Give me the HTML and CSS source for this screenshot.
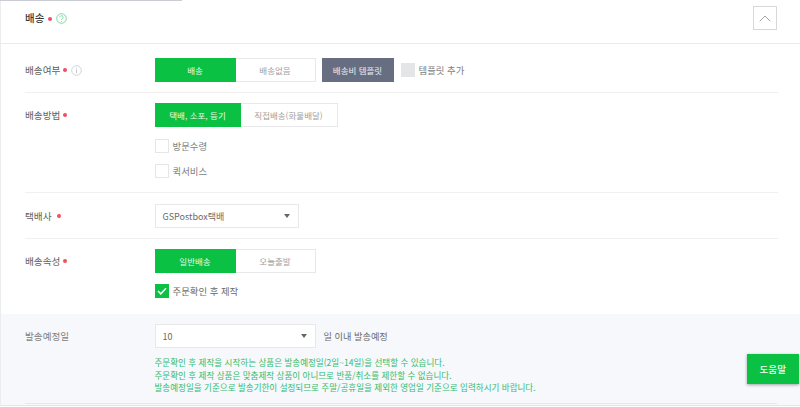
FILE: index.html
```html
<!DOCTYPE html>
<html lang="ko">
<head>
<meta charset="utf-8">
<title>배송</title>
<link rel="stylesheet" href="styles.css">
</head>
<body>
<div class="top-edge"></div>
<section class="panel">
  <header class="head">
    <h2 class="title">배송</h2><span class="dot"></span>
    <svg class="ico" width="11" height="11" viewBox="0 0 11 11"><circle cx="5.5" cy="5.5" r="4.8" fill="none" stroke="#5fce8a" stroke-width=".8"/><path d="M3.9 4.3a1.6 1.6 0 1 1 2.5 1.3c-.6.4-.9.7-.9 1.3" fill="none" stroke="#5fce8a" stroke-width=".8"/><circle cx="5.5" cy="8.2" r=".5" fill="#5fce8a"/></svg>
    <button class="collapse"><svg width="12" height="7" viewBox="0 0 12 7"><path d="M.7 6.3 6 1l5.3 5.3" fill="none" stroke="#a5a5a5" stroke-width="1"/></svg></button>
  </header>
  <div class="row r1">
    <div class="label">배송여부<span class="dot"></span><svg class="ico" width="11" height="11" viewBox="0 0 11 11"><circle cx="5.5" cy="5.5" r="4.8" fill="none" stroke="#c4c8d0" stroke-width=".8"/><path d="M5.5 4.6v3.6M5.5 2.8v.9" stroke="#b5b9c2" stroke-width=".8"/></svg></div>
    <div class="field">
      <div class="line">
        <div class="seg"><span class="opt on w81">배송</span><span class="opt w80">배송없음</span></div>
        <button class="tpl">배송비 템플릿</button>
        <span class="box grey"></span><span class="txt">템플릿 추가</span>
      </div>
    </div>
  </div>
  <div class="row r2">
    <div class="label">배송방법<span class="dot"></span></div>
    <div class="field">
      <div class="seg"><span class="opt on w86">택배, 소포, 등기</span><span class="opt w97">직접배송(화물배달)</span></div>
      <div class="check c1"><span class="box"></span><span class="txt">방문수령</span></div>
      <div class="check c2"><span class="box"></span><span class="txt">퀵서비스</span></div>
    </div>
  </div>
  <div class="row r3">
    <div class="label">택배사<span class="dot wide"></span></div>
    <div class="field">
      <div class="select w144"><span>GSPostbox택배</span><i class="caret"></i></div>
    </div>
  </div>
  <div class="row r4">
    <div class="label">배송속성<span class="dot"></span></div>
    <div class="field">
      <div class="seg"><span class="opt on w81">일반배송</span><span class="opt w80">오늘출발</span></div>
      <div class="check c3">
        <span class="box on"><svg width="10" height="8" viewBox="0 0 10 8"><path d="M1 4l2.8 2.8L9 1.2" fill="none" stroke="#fff" stroke-width="1.5"/></svg></span>
        <span class="txt strong">주문확인 후 제작</span>
      </div>
    </div>
  </div>
  <div class="row r5">
    <div class="label soft">발송예정일</div>
    <div class="field">
      <div class="line">
        <div class="select w161"><span>10</span><i class="caret"></i></div>
        <span class="txt after">일 이내 발송예정</span>
      </div>
      <ul class="notes">
        <li>주문확인 후 제작을 시작하는 상품은 발송예정일(2일~14일)을 선택할 수 있습니다.</li>
        <li>주문확인 후 제작 상품은 맞춤제작 상품이 아니므로 반품/취소를 제한할 수 없습니다.</li>
        <li>발송예정일을 기준으로 발송기한이 설정되므로 주말/공휴일을 제외한 영업일 기준으로 입력하시기 바랍니다.</li>
      </ul>
    </div>
  </div>
  <div class="tail"></div>
</section>
<button class="help">도움말</button>
</body>
</html>
```
FILE: styles.css
```css
* { box-sizing: border-box; }
html, body { margin: 0; height: 407px; overflow: hidden; background: #fff; }
body { font-family: "Noto Sans CJK KR", "Noto Sans", sans-serif; font-size: 9px; color: #666; position: relative; }
ul { list-style: none; margin: 0; padding: 0; }
button { font-family: inherit; cursor: pointer; }
.top-edge { width: 182px; height: 1px; background: #c9ccd3; }
.panel { border-left: 1px solid #ececec; height: 405px; border-bottom: 1px solid #e4e4e4; }
.head { height: 43px; border-bottom: 1px solid #ebebeb; display: flex; align-items: flex-start; padding: 5px 23px 0 24px; }
.title { margin: 4px 0 0; font-size: 10.5px; line-height: 16px; font-weight: 500; color: #3a3a3a; }
.head .dot { margin-top: 11px; margin-left: 4px; }
.head .ico { margin-left: 4px; margin-top: 7px; }
.collapse { margin-left: auto; width: 24px; height: 24px; padding: 0; background: #fff; border: 1px solid #d8d8d8; display: flex; align-items: center; justify-content: center; }
.dot { display: inline-block; width: 4px; height: 4px; border-radius: 50%; background: #ef4f5f; margin-left: 3px; flex: none; }
.dot.wide { margin-left: 6px; }
.label .ico { margin-left: 4px; }
.row { display: flex; margin-left: 24px; margin-right: 22px; border-bottom: 1px solid #f0f0f0; }
.label { width: 129.5px; flex: none; display: flex; align-items: center; height: 24px; font-size: 9.6px; color: #5e5e5e; }
.label.soft { color: #808080; }
.field { flex: 1; min-width: 0; }
.line { display: flex; align-items: center; }
.r1 { height: 49px; padding-top: 14px; }
.r2 { height: 100px; padding-top: 10px; }
.r3 { height: 46px; padding-top: 11px; }
.r4 { height: 75px; padding-top: 10px; border-bottom: 0; }
.r5 { height: 89px; margin: 0; padding: 10px 22px 0 24px; background: #f6f8fb; border-bottom: 0; }
.tail { height: 2px; background: #f6f8fb; padding: 0 23px 0 24px; }
.tail::before { content: ""; display: block; height: 1px; background: #e6e8ec; }
.seg { display: flex; height: 24px; }
.opt { height: 24px; display: flex; align-items: center; justify-content: center; border: 1px solid #e8e8e8; border-left: 0; background: #fff; color: #a0a0a0; font-size: 8.5px; }
.opt.on { background: #0bc143; border: 0; color: #e6fbec; }
.w81 { width: 81px; } .w80 { width: 80px; } .w86 { width: 86px; } .w97 { width: 97px; }
.tpl { margin-left: 6px; width: 72px; height: 24px; padding: 0; border: 0; background: #676e82; color: #eceef2; font-size: 8.5px; }
.box { width: 14px; height: 14px; flex: none; border: 1px solid #e6e6e6; background: #fff; display: flex; align-items: center; justify-content: center; }
.box.grey { margin-left: 7px; background: #e3e5e9; border: 0; }
.box.on { background: #0bc143; border: 0; }
.txt { margin-left: 4px; font-size: 9.4px; color: #7d7d7d; }
.txt.strong { color: #6a6a6a; }
.txt.after { margin-left: 8px; color: #6a6a6a; font-size: 9.2px; }
.check { display: flex; align-items: center; }
.c1 { margin-top: 12px; }
.c2 { margin-top: 11px; }
.c3 { margin-top: 11px; }
.select { height: 24px; background: #fff; border: 1px solid #e8e8e8; display: flex; align-items: center; justify-content: space-between; padding: 0 8px 0 7px; font-size: 9px; color: #6a6a6a; }
.w144 { width: 144px; } .w161 { width: 161px; }
.caret { width: 0; height: 0; border-left: 3.5px solid transparent; border-right: 3.5px solid transparent; border-top: 4px solid #666; }
.notes { margin-top: 8px; color: #35bb6d; font-size: 8.55px; line-height: 12.5px; white-space: nowrap; }
.help { position: absolute; left: 746.5px; top: 353.5px; width: 52.5px; height: 30.5px; padding: 0; border: 0; background: #0bc143; color: #f2fff6; font-size: 9.6px; font-weight: 500; box-shadow: 0 1px 3px rgba(0,0,0,.35); }
```
